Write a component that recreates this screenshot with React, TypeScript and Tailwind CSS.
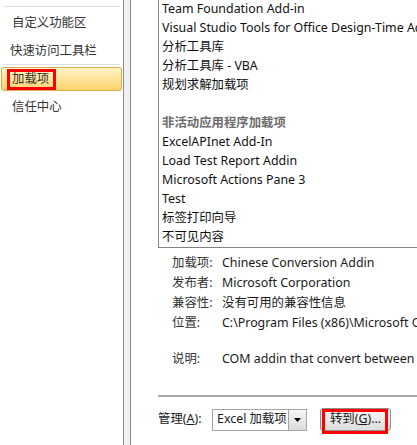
const font = "font-['Segoe_UI','Noto_Sans','Noto_Sans_CJK_SC',sans-serif]"

const listRows = [
  { text: "Team Foundation Add-in" },
  { text: "Visual Studio Tools for Office Design-Time Adaptor for Excel" },
  { text: "分析工具库" },
  { text: "分析工具库 - VBA" },
  { text: "规划求解加载项" },
  { text: "" },
  { text: "非活动应用程序加载项", header: true },
  { text: "ExcelAPInet Add-In" },
  { text: "Load Test Report Addin" },
  { text: "Microsoft Actions Pane 3" },
  { text: "Test" },
  { text: "标签打印向导" },
  { text: "不可见内容" },
]

const details = [
  ["加载项:", "Chinese Conversion Addin"],
  ["发布者:", "Microsoft Corporation"],
  ["兼容性:", "没有可用的兼容性信息"],
  ["位置:", "C:\\Program Files (x86)\\Microsoft Office\\Office14\\ADDINS"],
]

export default function App() {
  return (
    <div className={`flex w-[417px] h-[445px] overflow-hidden bg-white text-[12.4px] text-[#1a1a1a] ${font}`}>
      {/* Sidebar */}
      <div className="flex flex-col w-[123px] shrink-0 pt-[6px]">
        <div className="mx-[3px] h-[2px] border-t border-[#dfe0e6] border-b border-b-white" />
        <div className="h-[28px] flex items-center pl-[12px] text-[#333] mt-[1px]">自定义功能区</div>
        <div className="h-[28px] flex items-center pl-[10px] text-[#333]">快速访问工具栏</div>
        <div className="mx-[3px] h-[2px] border-t border-[#dfe0e6] border-b border-b-white mt-[-1px]" />
        <div className="relative mx-[1px] mt-[1px] h-[24px] rounded-[3px] border border-[#d9ad4a] bg-gradient-to-b from-[#fff3c6] to-[#fdd468] flex items-center pl-[10px] text-[#333]">
          加载项
          <div className="absolute left-[5px] top-[1px] w-[49px] h-[21px] border-[3px] border-[#ff0000]" />
        </div>
        <div className="h-[28px] flex items-center pl-[12px] text-[#333] mt-[2px]">信任中心</div>
      </div>

      {/* Divider */}
      <div className="w-[8px] shrink-0 border-x border-[#8a8e96] bg-[#f0f0f0]" />

      {/* Right panel */}
      <div className="flex flex-col flex-1 min-w-0 pl-[27px]">
        <div className="w-[320px] shrink-0 border-l border-b border-[#838383]">
          {listRows.map((r, i) => (
            <div
              key={i}
              className={`h-[19px] flex items-center pl-[3px] whitespace-nowrap ${
                r.header ? "font-bold text-[#6d6d6d]" : "text-[#111]"
              }`}
            >
              {r.text}
            </div>
          ))}
        </div>

        <div className="mt-[5px] pl-[14px] flex flex-col">
          {details.map(([k, v]) => (
            <div key={k} className="h-[20px] flex items-center whitespace-nowrap">
              <span className="w-[50px] shrink-0 text-[#333]">{k}</span>
              <span>{v}</span>
            </div>
          ))}
          <div className="h-[20px] flex items-center whitespace-nowrap mt-[16px]">
            <span className="w-[50px] shrink-0 text-[#333]">说明:</span>
            <span>COM addin that convert between Simplified and Traditional Chinese</span>
          </div>
        </div>

        <div className="mt-[26px] h-[2px] w-[300px] shrink-0 bg-[#a9a9a9]" />

        <div className="mt-[11px] flex items-center h-[23px]">
          <span className="w-[54px] shrink-0 whitespace-nowrap">
            管理(<span className="underline">A</span>):
          </span>
          <div className="flex h-[22px] w-[95px] border border-[#a5a5a5] bg-white">
            <div className="flex-1 flex items-center pl-[4px] whitespace-nowrap">Excel 加载项</div>
            <div className="w-[18px] border-l border-[#a5a5a5] bg-gradient-to-b from-[#f5f5f5] to-[#dcdcdc] flex items-center justify-center">
              <svg width="7" height="4" viewBox="0 0 7 4">
                <path d="M0 0h7L3.5 4z" fill="#000" />
              </svg>
            </div>
          </div>
          <div className="relative ml-[13px] h-[23px] w-[71px] rounded-[3px] border border-[#8e8e8e] bg-gradient-to-b from-[#f6f6f6] to-[#dedede] flex items-center justify-center whitespace-nowrap">
            转到(<span className="underline">G</span>)...
            <div className="absolute left-[1px] top-[0px] w-[66px] h-[25px] border-[3px] border-[#ff0000]" />
          </div>
        </div>
      </div>
    </div>
  )
}
